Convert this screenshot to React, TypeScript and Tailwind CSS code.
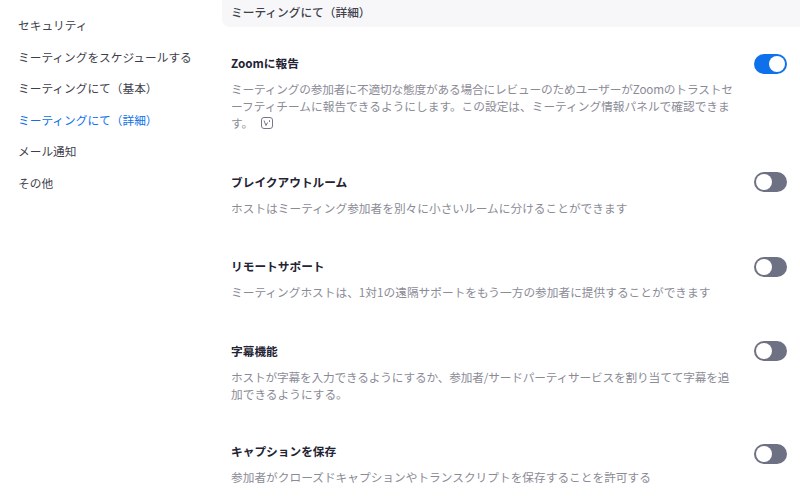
import React from "react";

const NAV_ITEMS = [
  "セキュリティ",
  "ミーティングをスケジュールする",
  "ミーティングにて（基本）",
  "ミーティングにて（詳細）",
  "メール通知",
  "その他",
];

const FONT = "font-['Noto_Sans_CJK_JP','Noto_Sans',sans-serif]";

function Toggle({ on, className = "" }: { on?: boolean; className?: string }) {
  return (
    <div
      className={`flex h-[20px] w-[33px] shrink-0 items-center rounded-full p-[2px] ${className} ${
        on ? "justify-end bg-[#0e71eb]" : "justify-start bg-[#6e7084]"
      }`}
    >
      <div className="h-[16px] w-[16px] rounded-full bg-white" />
    </div>
  );
}

// small "verified" badge after the first description
function BadgeIcon() {
  return (
    <svg
      viewBox="0 0 12 12"
      className="ml-[8px] inline-block h-[12px] w-[12px] align-[-1px]"
      fill="none"
      stroke="#77778a"
      strokeWidth="1"
    >
      <rect x="0.5" y="0.5" width="11" height="11" rx="2.5" />
      <path d="M3 3.5 L5 8.5 L6.5 5.5 M8.5 3.2 L8.5 5" />
    </svg>
  );
}

function Setting({
  title,
  on,
  className,
  toggleClass,
  children,
}: {
  title: string;
  on?: boolean;
  className: string;
  toggleClass?: string;
  children: React.ReactNode;
}) {
  return (
    <div className={`flex items-start justify-between ${className}`}>
      <div className="w-[504px]">
        <div className="text-[11.7px] leading-[18px] font-bold text-[#232333]">{title}</div>
        <div className="mt-[8px] text-[11.7px] leading-[17px] whitespace-nowrap text-[#8b8b96]">
          {children}
        </div>
      </div>
      <Toggle on={on} className={toggleClass} />
    </div>
  );
}

export default function App() {
  return (
    <div className={`flex h-[500px] w-[800px] overflow-hidden bg-white ${FONT}`}>
      <nav className="w-[222px] shrink-0 pt-[9px] pl-[18px]">
        {NAV_ITEMS.map((item, i) => (
          <div
            key={item}
            className={`h-[31.5px] text-[11.7px] leading-[31.5px] whitespace-nowrap ${
              i === 3 ? "text-[#0e71eb]" : "text-[#3f3f4c]"
            }`}
          >
            {item}
          </div>
        ))}
      </nav>
      <main className="min-w-0 flex-1">
        <div className="h-[27px] rounded-bl-[8px] bg-[#f7f7fa] pl-[9px] text-[11.7px] leading-[24px] font-medium text-[#3f3f4c]">
          ミーティングにて（詳細）
        </div>
        <div className="pr-[13px] pl-[9px]">
          <Setting title="Zoomに報告" on className="pt-[27px]">
            <span className="tracking-[-0.18px]">
              ミーティングの参加者に不適切な態度がある場合にレビューのためユーザーがZoomのトラストセ
            </span>
            <br />
            ーフティチームに報告できるようにします。この設定は、ミーティング情報パネルで確認できま
            <br />
            す。
            <BadgeIcon />
          </Setting>
          <Setting title="ブレイクアウトルーム" className="pt-[42px]" toggleClass="-mt-[1px]">
            ホストはミーティング参加者を別々に小さいルームに分けることができます
          </Setting>
          <Setting title="リモートサポート" className="pt-[41px]">
            ミーティングホストは、1対1の遠隔サポートをもう一方の参加者に提供することができます
          </Setting>
          <Setting title="字幕機能" className="pt-[42px]" toggleClass="-mt-[1px]">
            <span className="tracking-[-0.18px]">
              ホストが字幕を入力できるようにするか、参加者/サードパーティサービスを割り当てて字幕を追
            </span>
            <br />
            加できるようにする。
          </Setting>
          <Setting title="キャプションを保存" className="pt-[40px]" toggleClass="mt-[2px]">
            参加者がクローズドキャプションやトランスクリプトを保存することを許可する
          </Setting>
        </div>
      </main>
    </div>
  );
}
